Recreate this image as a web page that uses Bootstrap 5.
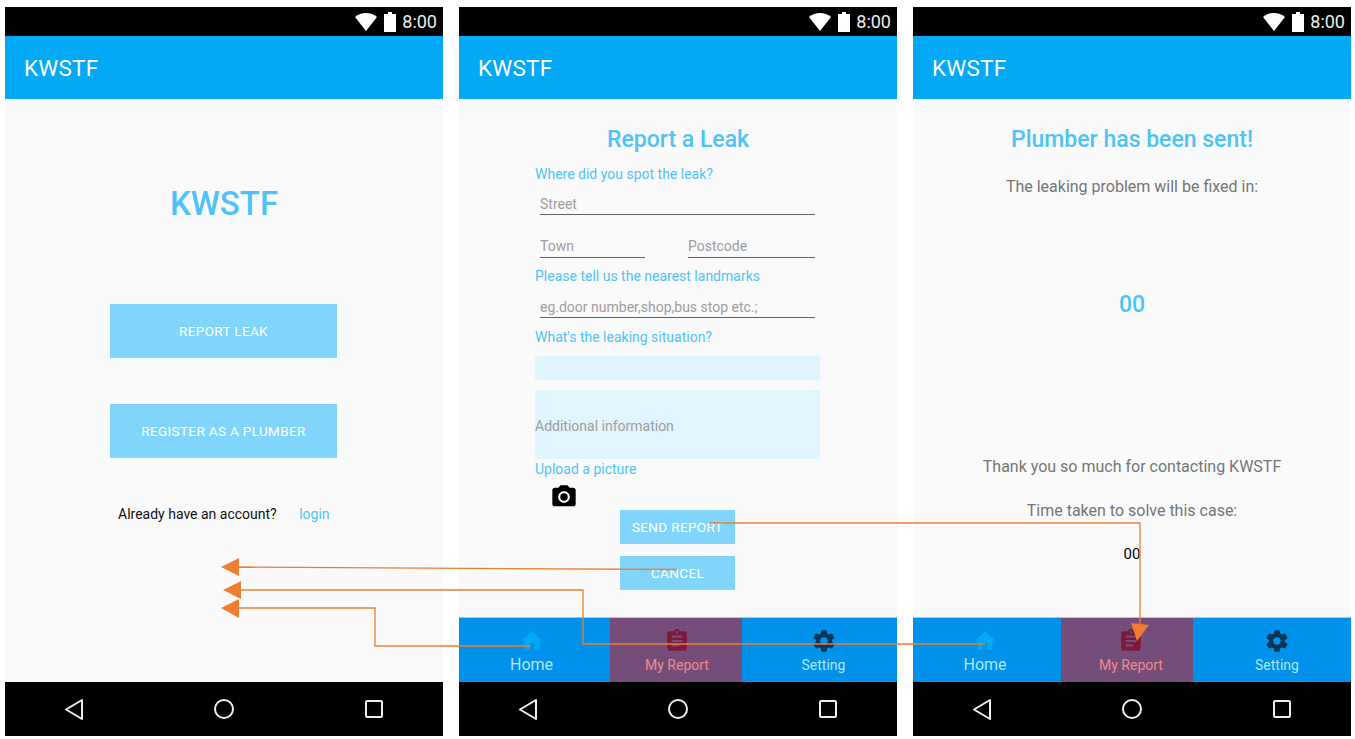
<!DOCTYPE html>
<html lang="en">
<head>
    <meta charset="UTF-8">
    <meta name="viewport" content="width=device-width, initial-scale=1.0">
    <title>KWSTF</title>
    <link href="https://cdn.jsdelivr.net/npm/bootstrap@5.3.0/dist/css/bootstrap.min.css" rel="stylesheet">
    <style>
        html, body {
            background-color: #fff;
            overflow: hidden;
        }
        body {
            font-family: Roboto, "Liberation Sans", sans-serif;
        }
        .board {
            width: 1355px;
            height: 739px;
            padding: 7px 4px 3px 5px;
            gap: 16px;
        }
        .phone {
            width: 438px;
            height: 729px;
            background-color: #fafafa;
        }
        .status-bar {
            height: 29px;
            background-color: #000;
            color: #eee;
            font-size: 18px;
            padding-right: 6px;
            gap: 6px;
        }
        .app-bar {
            height: 63px;
            background-color: #03a9f4;
            color: #fff;
            font-size: 22.500px;
            padding-left: 19px;
            padding-top: 2px;
            letter-spacing: .2px;
        }
        .screen {
            min-height: 0;
        }
        .sky {
            color: #4fc3f7;
        }
        .brand-title {
            font-size: 33px;
            font-weight: 500;
            line-height: 40px;
            margin-top: 85px;
        }
        .sky-btn {
            display: block;
            background-color: #81d4fa;
            border: 0;
            border-radius: 0;
            color: #fff;
            font-size: 13.500px;
            letter-spacing: .35px;
            text-transform: uppercase;
            padding: 1px 0 0;
        }
        .sky-btn:hover {
            background-color: #81d4fa;
            color: #fff;
        }
        .btn-big {
            width: 227px;
            height: 54px;
            margin-left: 105px;
        }
        .report-first { margin-top: 80px; }
        .second-big { margin-top: 46px; }
        .account-row {
            font-size: 14px;
            line-height: 20px;
            margin-top: 46px;
            padding-left: 113px;
            color: #111;
        }
        .account-row a {
            color: #4fc3f7;
            text-decoration: none;
            margin-left: 19px;
        }
        .screen-title {
            font-size: 23px;
            font-weight: 500;
            line-height: 30px;
            margin-top: 26px;
        }
        .report-form {
            width: 285px;
            margin-left: 76px;
        }
        .form-label-sky {
            color: #4fc3f7;
            font-size: 14px;
            line-height: 20px;
        }
        .line-field {
            color: #9e9e9e;
            font-size: 14px;
            line-height: 20px;
            padding-top: 1px;
            border-bottom: 1px solid #616161;
        }
        .wide-field {
            width: 275px;
            margin-left: 5px;
            height: 22px;
        }
        .town-field {
            width: 105px;
            margin-left: 5px;
            height: 23px;
        }
        .postcode-field {
            width: 127px;
            margin-left: 43px;
            height: 23px;
        }
        .gap-one { margin-top: 9px; }
        .gap-two { margin-top: 9px; }
        .gap-three { margin-top: 20px; }
        .gap-four { margin-top: 8px; }
        .gap-five { margin-top: 10px; }
        .pale-box {
            background-color: #e1f5fe;
        }
        .box-one { height: 24px; }
        .box-two { height: 69px; margin-top: 10px; }
        .pale-box-text {
            color: #9e9e9e;
            font-size: 14px;
            padding-top: 4px;
        }
        .camera-row {
            height: 27px;
            margin-top: 4px;
            padding-left: 15px;
        }
        .btn-small {
            width: 115px;
            height: 34px;
            margin-left: 85px;
        }
        .second-small { margin-top: 12px; }
        .gray-line {
            color: #757575;
            font-size: 16px;
            line-height: 20px;
        }
        .count-big {
            font-size: 23px;
            font-weight: 500;
            line-height: 30px;
        }
        .fixed-line { margin-top: 22px; }
        .count-line { margin-top: 93px; }
        .thanks-line { margin-top: 137px; }
        .taken-line { margin-top: 24px; }
        .taken-count { margin-top: 23px; font-size: 15px; }
        .tab-bar {
            height: 65px;
            background-color: #0091ea;
            border-top: 1px solid #81d4fa;
        }
        .tab-item {
            padding-top: 10px;
            color: #b3e5fc;
            font-size: 14px;
            line-height: 20px;
        }
        .tab-item svg {
            display: block;
            margin: 0 auto 1px;
        }
        .tab-home {
            width: 151px;
            padding-right: 6px;
            font-size: 16px;
        }
        .tab-report {
            width: 132px;
            background-color: #754d7b;
            color: #f08a8a;
            padding-left: 2px;
        }
        .tab-setting {
            width: 155px;
            padding-left: 8px;
        }
        .shifted .tab-home {
            width: 148px;
            padding-right: 4px;
        }
        .shifted .tab-report {
            padding-left: 8px;
        }
        .shifted .tab-setting {
            width: 158px;
            padding-left: 10px;
        }
        .nav-bar {
            height: 54px;
            background-color: #000;
            padding: 0 57px;
        }
        .flow-lines {
            position: absolute;
            left: 0;
            top: 0;
            pointer-events: none;
        }
    </style>
</head>
<body>
    <div class="board d-flex position-relative">

        <!-- login -->
        <div class="phone d-flex flex-column">
            <div class="status-bar d-flex justify-content-end align-items-center">
                <svg width="24" height="18" viewBox="0 0 24 18"><path fill="#fff" d="M1 4C4 1.500 8 0 12 0s8 1.500 11 4L12 18z"/></svg>
                <svg width="12" height="20" viewBox="0 0 12 20"><path fill="#fff" d="M4 0h4v2h4v18H0V2h4z"/></svg>
                <span>8:00</span>
            </div>
            <div class="app-bar d-flex align-items-center">KWSTF</div>
            <div class="screen flex-grow-1">
                <div class="brand-title sky text-center">KWSTF</div>
                <button class="btn sky-btn btn-big report-first">Report leak</button>
                <button class="btn sky-btn btn-big second-big">Register as a plumber</button>
                <div class="account-row">Already have an account? <a href="#">login</a></div>
            </div>
            <div class="nav-bar d-flex justify-content-between align-items-center">
                <svg width="24" height="24" viewBox="0 0 24 24"><path fill="none" stroke="#eee" stroke-width="2" stroke-linejoin="round" d="M20 3v19L4 12.500z"/></svg>
                <svg width="24" height="24" viewBox="0 0 24 24"><circle cx="12" cy="12" r="9" fill="none" stroke="#eee" stroke-width="2"/></svg>
                <svg width="24" height="24" viewBox="0 0 24 24"><rect x="4" y="4" width="16" height="16" rx="1" fill="none" stroke="#eee" stroke-width="2"/></svg>
            </div>
        </div>

        <!-- report form -->
        <div class="phone d-flex flex-column">
            <div class="status-bar d-flex justify-content-end align-items-center">
                <svg width="24" height="18" viewBox="0 0 24 18"><path fill="#fff" d="M1 4C4 1.500 8 0 12 0s8 1.500 11 4L12 18z"/></svg>
                <svg width="12" height="20" viewBox="0 0 12 20"><path fill="#fff" d="M4 0h4v2h4v18H0V2h4z"/></svg>
                <span>8:00</span>
            </div>
            <div class="app-bar d-flex align-items-center">KWSTF</div>
            <div class="screen flex-grow-1">
                <div class="screen-title sky text-center">Report a Leak</div>
                <div class="report-form">
                    <div class="form-label-sky gap-one">Where did you spot the leak?</div>
                    <div class="line-field wide-field gap-two">Street</div>
                    <div class="d-flex gap-three">
                        <div class="line-field town-field">Town</div>
                        <div class="line-field postcode-field">Postcode</div>
                    </div>
                    <div class="form-label-sky gap-four">Please tell us the nearest landmarks</div>
                    <div class="line-field wide-field gap-five">eg.door number,shop,bus stop etc.;</div>
                    <div class="form-label-sky gap-two">What's the leaking situation?</div>
                    <div class="pale-box box-one gap-two"></div>
                    <div class="pale-box box-two d-flex align-items-center pale-box-text">Additional information</div>
                    <div class="form-label-sky">Upload a picture</div>
                    <div class="camera-row">
                        <svg width="28" height="28" viewBox="0 0 24 24"><circle cx="12" cy="12" r="3.200"/><path d="M9 2L7.170 4H4c-1.100 0-2 .9-2 2v12c0 1.100.9 2 2 2h16c1.100 0 2-.9 2-2V6c0-1.100-.9-2-2-2h-3.170L15 2H9zm3 15c-2.760 0-5-2.240-5-5s2.240-5 5-5 5 2.240 5 5-2.240 5-5 5z"/></svg>
                    </div>
                    <button class="btn sky-btn btn-small">Send report</button>
                    <button class="btn sky-btn btn-small second-small">Cancel</button>
                </div>
            </div>
            <div class="tab-bar d-flex text-center">
                <div class="tab-item tab-home">
                    <svg width="26" height="26" viewBox="0 0 24 24"><path fill="#03a9f4" d="M10 20v-6h4v6h5v-8h3L12 3 2 12h3v8z"/></svg>
                    Home
                </div>
                <div class="tab-item tab-report">
                    <svg width="26" height="26" viewBox="0 0 24 24"><path fill="#7d1a3a" d="M19 3h-4.180C14.400 1.840 13.300 1 12 1c-1.300 0-2.400.84-2.820 2H5c-1.100 0-2 .9-2 2v14c0 1.100.9 2 2 2h14c1.100 0 2-.9 2-2V5c0-1.100-.9-2-2-2zm-7 0c.55 0 1 .45 1 1s-.45 1-1 1-1-.45-1-1 .45-1 1-1zm2 14H7v-2h7v2zm3-4H7v-2h10v2zm0-4H7V7h10v2z"/></svg>
                    My Report
                </div>
                <div class="tab-item tab-setting">
                    <svg width="26" height="26" viewBox="0 0 24 24"><path fill="#0a3557" d="M19.430 12.980c.04-.32.07-.64.07-.98s-.03-.66-.07-.98l2.110-1.650c.19-.15.24-.42.12-.64l-2-3.460c-.12-.22-.39-.3-.61-.22l-2.490 1c-.52-.4-1.080-.73-1.690-.98l-.38-2.650C14.460 2.180 14.250 2 14 2h-4c-.25 0-.46.18-.49.42l-.38 2.650c-.61.25-1.170.59-1.690.98l-2.490-1c-.23-.09-.49 0-.61.22l-2 3.460c-.13.22-.07.49.12.64l2.110 1.650c-.04.32-.07.65-.07.98s.03.66.07.98l-2.110 1.650c-.19.15-.24.42-.12.64l2 3.460c.12.22.39.3.61.22l2.490-1c.52.4 1.080.73 1.690.98l.38 2.650c.03.24.24.42.49.42h4c.25 0 .46-.18.49-.42l.38-2.650c.61-.25 1.170-.59 1.690-.98l2.490 1c.23.09.49 0 .61-.22l2-3.460c.12-.22.07-.49-.12-.64l-2.110-1.650zM12 15.500c-1.930 0-3.500-1.570-3.500-3.500s1.570-3.500 3.500-3.500 3.500 1.570 3.500 3.500-1.570 3.500-3.500 3.500z"/></svg>
                    Setting
                </div>
            </div>
            <div class="nav-bar d-flex justify-content-between align-items-center">
                <svg width="24" height="24" viewBox="0 0 24 24"><path fill="none" stroke="#eee" stroke-width="2" stroke-linejoin="round" d="M20 3v19L4 12.500z"/></svg>
                <svg width="24" height="24" viewBox="0 0 24 24"><circle cx="12" cy="12" r="9" fill="none" stroke="#eee" stroke-width="2"/></svg>
                <svg width="24" height="24" viewBox="0 0 24 24"><rect x="4" y="4" width="16" height="16" rx="1" fill="none" stroke="#eee" stroke-width="2"/></svg>
            </div>
        </div>

        <!-- plumber sent -->
        <div class="phone d-flex flex-column">
            <div class="status-bar d-flex justify-content-end align-items-center">
                <svg width="24" height="18" viewBox="0 0 24 18"><path fill="#fff" d="M1 4C4 1.500 8 0 12 0s8 1.500 11 4L12 18z"/></svg>
                <svg width="12" height="20" viewBox="0 0 12 20"><path fill="#fff" d="M4 0h4v2h4v18H0V2h4z"/></svg>
                <span>8:00</span>
            </div>
            <div class="app-bar d-flex align-items-center">KWSTF</div>
            <div class="screen flex-grow-1 text-center">
                <div class="screen-title sky">Plumber has been sent!</div>
                <div class="gray-line fixed-line">The leaking problem will be fixed in:</div>
                <div class="count-big sky count-line">00</div>
                <div class="gray-line thanks-line">Thank you so much for contacting KWSTF</div>
                <div class="gray-line taken-line">Time taken to solve this case:</div>
                <div class="gray-line text-black taken-count">00</div>
            </div>
            <div class="tab-bar shifted d-flex text-center">
                <div class="tab-item tab-home">
                    <svg width="26" height="26" viewBox="0 0 24 24"><path fill="#03a9f4" d="M10 20v-6h4v6h5v-8h3L12 3 2 12h3v8z"/></svg>
                    Home
                </div>
                <div class="tab-item tab-report">
                    <svg width="26" height="26" viewBox="0 0 24 24"><path fill="#7d1a3a" d="M19 3h-4.180C14.400 1.840 13.300 1 12 1c-1.300 0-2.400.84-2.820 2H5c-1.100 0-2 .9-2 2v14c0 1.100.9 2 2 2h14c1.100 0 2-.9 2-2V5c0-1.100-.9-2-2-2zm-7 0c.55 0 1 .45 1 1s-.45 1-1 1-1-.45-1-1 .45-1 1-1zm2 14H7v-2h7v2zm3-4H7v-2h10v2zm0-4H7V7h10v2z"/></svg>
                    My Report
                </div>
                <div class="tab-item tab-setting">
                    <svg width="26" height="26" viewBox="0 0 24 24"><path fill="#0a3557" d="M19.430 12.980c.04-.32.07-.64.07-.98s-.03-.66-.07-.98l2.110-1.650c.19-.15.24-.42.12-.64l-2-3.460c-.12-.22-.39-.3-.61-.22l-2.490 1c-.52-.4-1.080-.73-1.690-.98l-.38-2.650C14.460 2.180 14.250 2 14 2h-4c-.25 0-.46.18-.49.42l-.38 2.650c-.61.25-1.170.59-1.690.98l-2.490-1c-.23-.09-.49 0-.61.22l-2 3.460c-.13.22-.07.49.12.64l2.110 1.650c-.04.32-.07.65-.07.98s.03.66.07.98l-2.110 1.650c-.19.15-.24.42-.12.64l2 3.460c.12.22.39.3.61.22l2.490-1c.52.4 1.080.73 1.690.98l.38 2.650c.03.24.24.42.49.42h4c.25 0 .46-.18.49-.42l.38-2.650c.61-.25 1.170-.59 1.690-.98l2.490 1c.23.09.49 0 .61-.22l2-3.460c.12-.22.07-.49-.12-.64l-2.110-1.650zM12 15.500c-1.930 0-3.500-1.570-3.500-3.500s1.570-3.500 3.500-3.500 3.500 1.570 3.500 3.500-1.570 3.500-3.500 3.500z"/></svg>
                    Setting
                </div>
            </div>
            <div class="nav-bar d-flex justify-content-between align-items-center">
                <svg width="24" height="24" viewBox="0 0 24 24"><path fill="none" stroke="#eee" stroke-width="2" stroke-linejoin="round" d="M20 3v19L4 12.500z"/></svg>
                <svg width="24" height="24" viewBox="0 0 24 24"><circle cx="12" cy="12" r="9" fill="none" stroke="#eee" stroke-width="2"/></svg>
                <svg width="24" height="24" viewBox="0 0 24 24"><rect x="4" y="4" width="16" height="16" rx="1" fill="none" stroke="#eee" stroke-width="2"/></svg>
            </div>
        </div>

        <!-- flow arrows drawn over the screens -->
        <svg class="flow-lines" width="1355" height="739" viewBox="0 0 1355 739">
            <g fill="none" stroke="#ed7d31" stroke-width="1.300">
                <path d="M677 569.500L236 567"/>
                <path d="M985 644H583V590H238"/>
                <path d="M531 646H375V608H236"/>
                <path d="M709 523H1140V628"/>
            </g>
            <g fill="#ed7d31">
                <path d="M221 567L239 558V576z"/>
                <path d="M223 590L241 581V599z"/>
                <path d="M221 608L239 599V618z"/>
                <path d="M1131 623L1149 625L1137 641z"/>
            </g>
        </svg>
    </div>

    <script src="https://cdn.jsdelivr.net/npm/bootstrap@5.3.0/dist/js/bootstrap.bundle.min.js"></script>
</body>
</html>
